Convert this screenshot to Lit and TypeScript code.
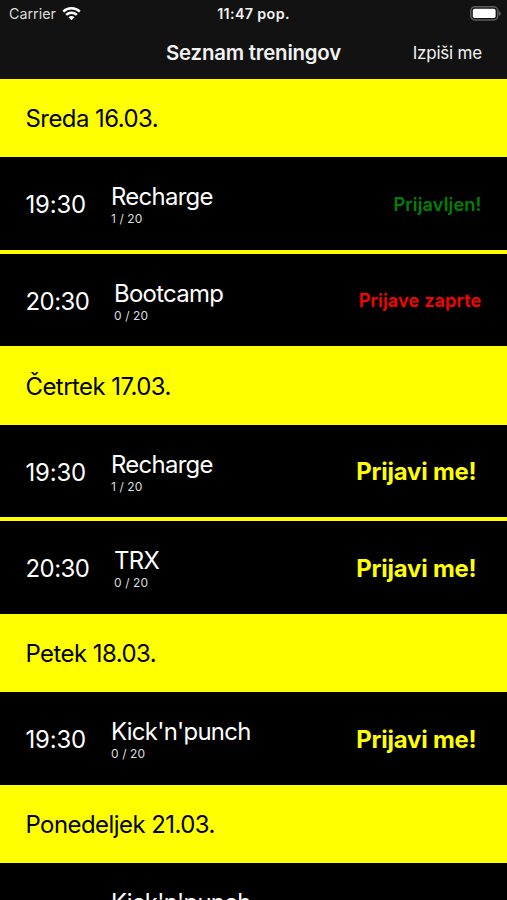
import { LitElement, html, css, nothing } from "lit";
import { customElement, property } from "lit/decorators.js";

type Status = "joined" | "closed" | "open";

interface Training {
  time: string;
  name: string;
  count: string;
  status: Status;
}

interface Day {
  label: string;
  trainings: Training[];
}

const STATUS_TEXT: Record<Status, string> = {
  joined: "Prijavljen!",
  closed: "Prijave zaprte",
  open: "Prijavi me!",
};

const DAYS: Day[] = [
  {
    label: "Sreda 16.03.",
    trainings: [
      { time: "19:30", name: "Recharge", count: "1 / 20", status: "joined" },
      { time: "20:30", name: "Bootcamp", count: "0 / 20", status: "closed" },
    ],
  },
  {
    label: "Četrtek 17.03.",
    trainings: [
      { time: "19:30", name: "Recharge", count: "1 / 20", status: "open" },
      { time: "20:30", name: "TRX", count: "0 / 20", status: "open" },
    ],
  },
  {
    label: "Petek 18.03.",
    trainings: [{ time: "19:30", name: "Kick'n'punch", count: "0 / 20", status: "open" }],
  },
  {
    label: "Ponedeljek 21.03.",
    trainings: [{ time: "19:30", name: "Kick'n'punch", count: "0 / 20", status: "open" }],
  },
];

@customElement("status-bar")
class StatusBar extends LitElement {
  static styles = css`
    :host {
      display: grid;
      grid-template-columns: 1fr auto 1fr;
      align-items: center;
      height: 27px;
      padding: 0 6px;
      box-sizing: border-box;
      font-size: 14.3px;
    }
    .carrier {
      display: flex;
      align-items: center;
      gap: 6px;
      padding-left: 3px;
      color: #ddd;
    }
    .clock {
      font-weight: 600;
      letter-spacing: 0.35px;
    }
    .battery {
      justify-self: end;
    }
    svg {
      display: block;
    }
  `;

  render() {
    return html`
      <div class="carrier">
        <span>Carrier</span>
        <svg width="19" height="14" viewBox="0 0 19 14" fill="none" stroke="#fff" stroke-width="2.5">
          <path d="M1.2 4.7C5.8 .2 13.2 .2 17.8 4.7" />
          <path d="M4.2 7.9C7.2 5.1 11.8 5.1 14.8 7.9" />
          <path d="M9.5 13.2 6.5 10.2C8.2 8.7 10.8 8.7 12.5 10.2Z" fill="#fff" stroke="none" />
        </svg>
      </div>
      <span class="clock">11:47 pop.</span>
      <svg class="battery" width="31" height="15" viewBox="0 0 31 15">
        <rect x=".8" y=".8" width="27" height="13.2" rx="4.2" fill="none" stroke="#5c5c5e" stroke-width="1.5" />
        <rect x="2.8" y="2.7" width="22.8" height="9.4" rx="1.8" fill="#fff" />
        <path d="M29 5.2v4.6c1.2-.4 1.8-1.3 1.8-2.3S30.2 5.6 29 5.2Z" fill="#5c5c5e" />
      </svg>
    `;
  }
}

@customElement("training-row")
class TrainingRow extends LitElement {
  @property({ attribute: false }) training!: Training;

  static styles = css`
    :host {
      display: flex;
      align-items: center;
      height: 92.7px;
      padding: 2px 25.5px 0;
      box-sizing: border-box;
      background: #000;
      color: #fff;
      font-size: 23.9px;
    }
    .time {
      width: 85.5px;
      letter-spacing: -0.15px;
    }
    .time.late {
      width: 88.5px;
      letter-spacing: -0.5px;
    }
    .name {
      line-height: 28px;
      letter-spacing: -0.7px;
    }
    .count {
      font-size: 12px;
      line-height: 15px;
      letter-spacing: 0.1px;
      color: #ddd;
    }
    .status {
      margin-left: auto;
      padding-bottom: 2px;
      font-weight: 600;
      font-size: 18.2px;
      letter-spacing: 0.12px;
    }
    .joined {
      color: #008000;
    }
    .closed {
      color: #f00;
    }
    .open {
      margin-right: 5px;
      padding-bottom: 1px;
      font-size: 23.9px;
      font-weight: 650;
      letter-spacing: -0.2px;
      color: #ff0;
    }
  `;

  render() {
    const t = this.training;
    return html`
      <div class="time ${t.time.startsWith("2") ? "late" : ""}">${t.time}</div>
      <div>
        <div class="name">${t.name}</div>
        <div class="count">${t.count}</div>
      </div>
      <div class="status ${t.status}">${STATUS_TEXT[t.status]}</div>
    `;
  }
}

@customElement("app-root")
class AppRoot extends LitElement {
  static styles = css`
    :host {
      display: block;
      height: 900px;
      overflow: hidden;
      background: #000;
      color: #f2f2f2;
      font-family: Inter, "Liberation Sans", sans-serif;
    }
    .top {
      height: 79px;
      background: #121212;
    }
    .nav {
      display: grid;
      grid-template-columns: 1fr auto 1fr;
      align-items: center;
      height: 51px;
      padding: 0 25px;
    }
    .title {
      grid-column: 2;
      font-size: 20.4px;
      font-weight: 600;
      letter-spacing: -0.2px;
    }
    .logout {
      justify-self: end;
      font-size: 17px;
      letter-spacing: -0.2px;
    }
    .day {
      display: flex;
      align-items: center;
      height: 78.3px;
      padding: 1.5px 25.5px 0;
      box-sizing: border-box;
      background: #ff0;
      color: #000;
      font-size: 23.9px;
      letter-spacing: -0.52px;
    }
    .divider {
      height: 3.8px;
      background: #ff0;
    }
  `;

  render() {
    return html`
      <div class="top">
        <status-bar></status-bar>
        <div class="nav">
          <div class="title">Seznam treningov</div>
          <div class="logout">Izpiši me</div>
        </div>
      </div>
      ${DAYS.map(
        (day) => html`
          <div class="day">${day.label}</div>
          ${day.trainings.map(
            (t, i) => html`
              ${i > 0 ? html`<div class="divider"></div>` : nothing}
              <training-row .training=${t}></training-row>
            `,
          )}
        `,
      )}
    `;
  }
}
